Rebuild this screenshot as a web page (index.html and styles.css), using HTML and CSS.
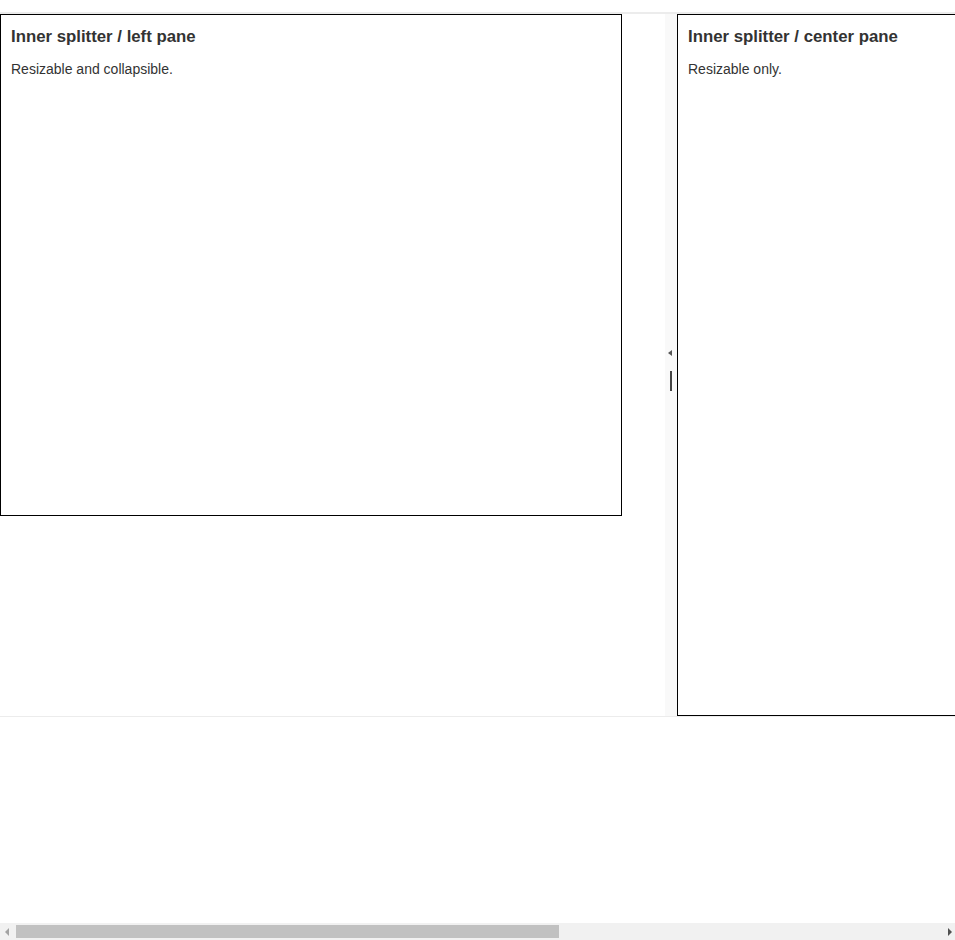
FILE: index.html
```html
<!DOCTYPE html>
<html lang="en">
<head>
    <meta charset="UTF-8">
    <meta name="viewport" content="width=device-width, initial-scale=1.0">
    <title>Nested splitter</title>
    <link rel="stylesheet" href="styles.css">
</head>
<body>

    <div class="splitter">
        <div class="pane pane-left">
            <div class="box box-left">
                <h3>Inner splitter / left pane</h3>
                <p>Resizable and collapsible.</p>
            </div>
        </div>

        <div class="splitbar">
            <span class="collapse-prev"></span>
            <span class="drag-handle"></span>
        </div>

        <div class="pane pane-center">
            <div class="box box-center">
                <h3>Inner splitter / center pane</h3>
                <p>Resizable only.</p>
            </div>
        </div>
    </div>

    <!-- barre de défilement horizontale -->
    <div class="hscroll">
        <span class="arrow arrow-left"></span>
        <div class="track">
            <div class="thumb"></div>
        </div>
        <span class="arrow arrow-right"></span>
    </div>

</body>
</html>
```

FILE: styles.css
```css
html {
    overflow: hidden;
}

html, body {
    margin: 0;
}

body {
    font-family: "Liberation Sans", Arial, sans-serif;
    color: #333;
    background-color: #fff;
    padding-top: 12px;
    width: 1623px;
}

.splitter {
    display: flex;
    height: 702px;
    border-top: 2px solid #ececec;
    border-bottom: 1px solid #ececec;
}

.pane {
    flex: none;
}

.pane-left {
    width: 665px;
}

.pane-center {
    flex: 1;
}

.box {
    border: 1px solid #000;
    padding: 11px 10px 10px;
    box-sizing: border-box;
}

.box-left {
    width: 622px;
    height: 502px;
}

.box-center {
    height: 702px;
}

.box h3 {
    font-size: 16.8px;
    font-weight: bold;
    margin: 0;
    line-height: 22px;
}

.box p {
    font-size: 14px;
    margin: 13px 0 0;
    line-height: 16px;
}

/* barre de séparation avec flèche et poignée */
.splitbar {
    width: 12px;
    background-color: #f9f9f9;
    display: flex;
    flex-direction: column;
    align-items: center;
    padding-top: 336px;
    box-sizing: border-box;
}

.collapse-prev {
    width: 0;
    height: 0;
    border-top: 3px solid transparent;
    border-bottom: 3px solid transparent;
    border-right: 4px solid #555;
    margin-left: -2px;
}

.drag-handle {
    width: 2px;
    height: 20px;
    background-color: #444;
    margin-top: 15px;
    margin-left: -1px;
}

/* Barre de défilement dessinée au bas de la fenêtre */
.hscroll {
    position: fixed;
    left: 0;
    bottom: 0;
    width: 955px;
    height: 17px;
    background-color: #f1f1f1;
    display: flex;
    align-items: center;
}

.track {
    flex: 1;
    height: 13px;
}

.thumb {
    width: 543px;
    height: 100%;
    background-color: #c1c1c1;
}

.arrow {
    width: 16px;
    display: flex;
    box-sizing: border-box;
}

.arrow::before {
    content: "";
    border-top: 4px solid transparent;
    border-bottom: 4px solid transparent;
}

.arrow-left {
    padding-left: 5px;
}

.arrow-left::before {
    border-right: 4px solid #a3a3a3;
}

.arrow-right {
    padding-left: 9px;
}

.arrow-right::before {
    border-left: 4px solid #505050;
}
```
